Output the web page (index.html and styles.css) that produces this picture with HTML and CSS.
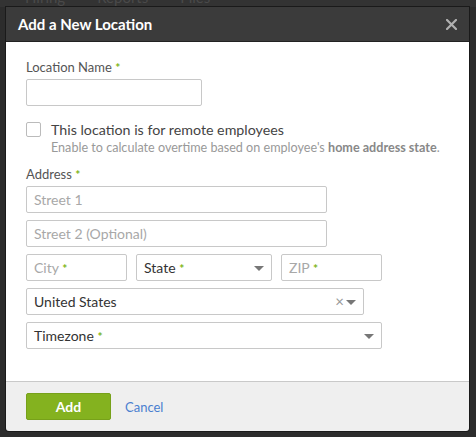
FILE: index.html
```html
<!DOCTYPE html>
<html>
<head>
<meta charset="utf-8">
<link rel="stylesheet" href="styles.css">
</head>
<body>
<div class="backdrop">
  <div class="bgnav"><span>Hiring</span><span>Reports</span><span>Files</span></div>
</div>
<div class="modal">
  <div class="header">
    <div class="title">Add a New Location</div>
    <svg class="close" width="11" height="11" viewBox="0 0 11 11"><path d="M1 1L10 10M10 1L1 10" stroke="#b0b0b0" stroke-width="2.2" stroke-linecap="square"/></svg>
  </div>
  <div class="body">
    <div class="label">Location Name <span class="req">*</span></div>
    <div class="input w-name"></div>
    <div class="check-row">
      <div class="checkbox"></div>
      <div class="check-text">
        <div class="check-label">This location is for remote employees</div>
        <div class="help">Enable to calculate overtime based on employee's <b>home address state</b>.</div>
      </div>
    </div>
    <div class="label addr">Address <span class="req">*</span></div>
    <div class="input w-street ph">Street 1</div>
    <div class="input w-street ph">Street 2 (Optional)</div>
    <div class="row">
      <div class="input w-city ph">City <span class="req">*</span></div>
      <div class="input select w-state">State <span class="req">*</span><span class="caret"></span></div>
      <div class="input w-zip ph">ZIP <span class="req">*</span></div>
    </div>
    <div class="input select w-country">United States<span class="clear">×</span><span class="caret"></span></div>
    <div class="input select w-tz">Timezone <span class="req">*</span><span class="caret"></span></div>
  </div>
  <div class="footer">
    <div class="btn">Add</div>
    <div class="cancel">Cancel</div>
  </div>
</div>
</body>
</html>
```

FILE: styles.css
```css
html, body {
  margin: 0;
  padding: 0;
}
body {
  width: 476px;
  height: 437px;
  background: #2c2c2c;
  font-family: Lato, "Open Sans", sans-serif;
  overflow: hidden;
}
.backdrop {
  height: 7px;
  overflow: hidden;
  background: #333;
}
.bgnav {
  display: flex;
  gap: 32px;
  padding-left: 25px;
  margin-top: -12px;
  font-size: 15px;
  line-height: 18px;
  color: #4a4a4a;
}
.modal {
  margin-left: 6px;
  width: 463px;
  height: 424px;
  display: flex;
  flex-direction: column;
  border-radius: 0 0 3px 3px;
  overflow: hidden;
  box-shadow: 0 0 0 1px #1a1a1a;
}
.header {
  height: 34px;
  flex: none;
  background: #3b3b3b;
  display: flex;
  align-items: center;
  justify-content: space-between;
  padding: 0 12px 0 12px;
  border-bottom: 1px solid #222;
}
.title {
  color: #fff;
  font-size: 15px;
  font-weight: 700;
}
.close {
  display: block;
}
.body {
  flex: 1;
  background: #fff;
  padding: 16px 0 0 20px;
  display: flex;
  flex-direction: column;
  align-items: flex-start;
}
.label {
  font-size: 13px;
  color: #555;
  line-height: 18px;
  margin-bottom: 2px;
}
.label.addr {
  margin-bottom: 2px;
}
.req {
  color: #7cb518;
  font-weight: 700;
  font-size: 12px;
}
.input {
  box-sizing: border-box;
  height: 27px;
  border: 1px solid #c8c8c8;
  border-radius: 2px;
  background: #fff;
  font-size: 14px;
  line-height: 25px;
  padding-left: 7px;
  color: #333;
  margin-bottom: 7px;
  position: relative;
}
.ph {
  color: #a8a8a8;
}
.w-name { width: 176px; }
.w-street { width: 301px; }
.w-city { width: 101px; }
.w-state { width: 136px; }
.w-zip { width: 101px; }
.w-country { width: 338px; }
.w-tz { width: 356px; }
.row {
  display: flex;
  gap: 9px;
}
.select {
  color: #333;
}
.caret {
  position: absolute;
  right: 7px;
  top: 11px;
  width: 0;
  height: 0;
  border-left: 5px solid transparent;
  border-right: 5px solid transparent;
  border-top: 5px solid #777;
}
.clear {
  position: absolute;
  right: 19px;
  top: 0;
  color: #999;
  font-size: 15px;
}
.check-row {
  display: flex;
  gap: 10px;
  margin-top: 8px;
  margin-bottom: 8px;
}
.checkbox {
  box-sizing: border-box;
  width: 15px;
  height: 15px;
  border: 1px solid #bbb;
  border-radius: 2px;
  margin-top: 1px;
}
.check-label {
  font-size: 14.25px;
  color: #444;
  line-height: 18px;
}
.help {
  font-size: 12.6px;
  color: #999;
  line-height: 18px;
}
.help b {
  color: #888;
}
.footer {
  height: 49px;
  flex: none;
  background: #efefef;
  border-top: 1px solid #c9c9c9;
  display: flex;
  align-items: center;
  padding-left: 20px;
  gap: 14px;
}
.btn {
  box-sizing: border-box;
  width: 85px;
  height: 27px;
  background: #84b21f;
  border: 1px solid #77a11a;
  border-radius: 2px;
  color: #fff;
  font-size: 14px;
  font-weight: 700;
  text-align: center;
  line-height: 25px;
}
.cancel {
  color: #4a7fd0;
  font-size: 13px;
}
```
